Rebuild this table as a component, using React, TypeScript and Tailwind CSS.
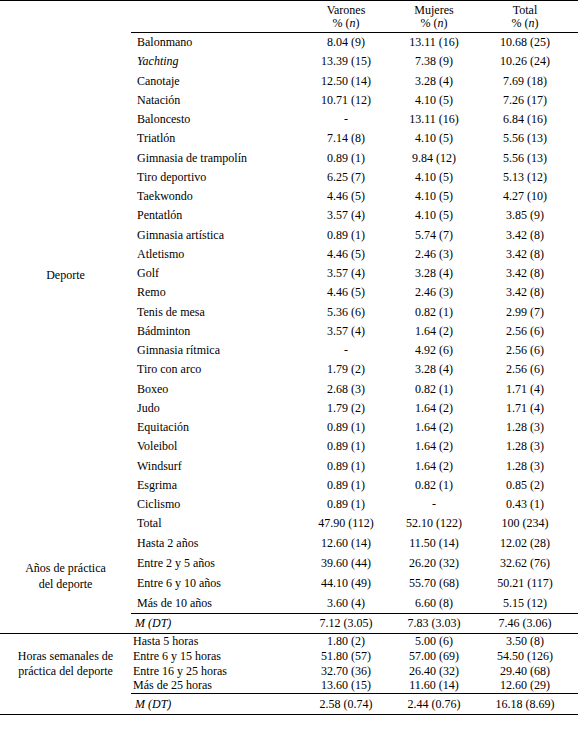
import React from 'react';

type Row = [string, string, string, string];

const sports: Row[] = [
  ['Balonmano', '8.04 (9)', '13.11 (16)', '10.68 (25)'],
  ['Yachting', '13.39 (15)', '7.38 (9)', '10.26 (24)'],
  ['Canotaje', '12.50 (14)', '3.28 (4)', '7.69 (18)'],
  ['Natación', '10.71 (12)', '4.10 (5)', '7.26 (17)'],
  ['Baloncesto', '-', '13.11 (16)', '6.84 (16)'],
  ['Triatlón', '7.14 (8)', '4.10 (5)', '5.56 (13)'],
  ['Gimnasia de trampolín', '0.89 (1)', '9.84 (12)', '5.56 (13)'],
  ['Tiro deportivo', '6.25 (7)', '4.10 (5)', '5.13 (12)'],
  ['Taekwondo', '4.46 (5)', '4.10 (5)', '4.27 (10)'],
  ['Pentatlón', '3.57 (4)', '4.10 (5)', '3.85 (9)'],
  ['Gimnasia artística', '0.89 (1)', '5.74 (7)', '3.42 (8)'],
  ['Atletismo', '4.46 (5)', '2.46 (3)', '3.42 (8)'],
  ['Golf', '3.57 (4)', '3.28 (4)', '3.42 (8)'],
  ['Remo', '4.46 (5)', '2.46 (3)', '3.42 (8)'],
  ['Tenis de mesa', '5.36 (6)', '0.82 (1)', '2.99 (7)'],
  ['Bádminton', '3.57 (4)', '1.64 (2)', '2.56 (6)'],
  ['Gimnasia rítmica', '-', '4.92 (6)', '2.56 (6)'],
  ['Tiro con arco', '1.79 (2)', '3.28 (4)', '2.56 (6)'],
  ['Boxeo', '2.68 (3)', '0.82 (1)', '1.71 (4)'],
  ['Judo', '1.79 (2)', '1.64 (2)', '1.71 (4)'],
  ['Equitación', '0.89 (1)', '1.64 (2)', '1.28 (3)'],
  ['Voleibol', '0.89 (1)', '1.64 (2)', '1.28 (3)'],
  ['Windsurf', '0.89 (1)', '1.64 (2)', '1.28 (3)'],
  ['Esgrima', '0.89 (1)', '0.82 (1)', '0.85 (2)'],
  ['Ciclismo', '0.89 (1)', '-', '0.43 (1)'],
];

const years: Row[] = [
  ['Hasta 2 años', '12.60 (14)', '11.50 (14)', '12.02 (28)'],
  ['Entre 2 y 5 años', '39.60 (44)', '26.20 (32)', '32.62 (76)'],
  ['Entre 6 y 10 años', '44.10 (49)', '55.70 (68)', '50.21 (117)'],
  ['Más de 10 años', '3.60 (4)', '6.60 (8)', '5.15 (12)'],
];

const hours: Row[] = [
  ['Hasta 5 horas', '1.80 (2)', '5.00 (6)', '3.50 (8)'],
  ['Entre 6 y 15 horas', '51.80 (57)', '57.00 (69)', '54.50 (126)'],
  ['Entre 16 y 25 horas', '32.70 (36)', '26.40 (32)', '29.40 (68)'],
  ['Más de 25 horas', '13.60 (15)', '11.60 (14)', '12.60 (29)'],
];

function Vals({ r, line }: { r: Row; line?: boolean }) {
  const b = line ? 'border-b border-black' : '';
  return (
    <>
      <td className={`p-0 text-center whitespace-nowrap ${b}`}>{r[1]}</td>
      <td className={`p-0 text-center whitespace-nowrap ${b}`}>{r[2]}</td>
      <td className={`p-0 pr-[4px] text-center whitespace-nowrap ${b}`}>{r[3]}</td>
    </>
  );
}

export default function App() {
  return (
    <div className="w-[578px] h-[731px] bg-white text-black font-[Liberation_Serif,Times_New_Roman,serif] text-[12px] leading-none">
      <table className="w-[578px] table-fixed border-collapse border-t border-black">
        <colgroup>
          <col className="w-[131px]" />
          <col className="w-[169px]" />
          <col className="w-[92px]" />
          <col className="w-[84px]" />
          <col className="w-[102px]" />
        </colgroup>
        <thead>
          <tr className="h-[16px]">
            <th className="p-0" />
            <th className="p-0" />
            <th className="p-0 pt-[3px] font-normal text-center">Varones</th>
            <th className="p-0 pt-[3px] font-normal text-center">Mujeres</th>
            <th className="p-0 pt-[3px] pr-[4px] font-normal text-center">Total</th>
          </tr>
          <tr className="h-[16px]">
            <th className="p-0" />
            <th className="p-0 border-b border-black" />
            <th className="p-0 pb-[2px] font-normal text-center border-b border-black">
              % (<i>n</i>)
            </th>
            <th className="p-0 pb-[2px] font-normal text-center border-b border-black">
              % (<i>n</i>)
            </th>
            <th className="p-0 pb-[2px] pr-[4px] font-normal text-center border-b border-black">
              % (<i>n</i>)
            </th>
          </tr>
        </thead>
        <tbody>
          {sports.map((r, i) => (
            <tr key={r[0]} className="h-[19.25px]">
              {i === 0 && (
                <td rowSpan={25} className="p-0 pt-[4px] text-center align-middle">
                  Deporte
                </td>
              )}
              <td className="p-0 pl-[6px] whitespace-nowrap">
                {r[0] === 'Yachting' ? <i>Yachting</i> : r[0]}
              </td>
              <Vals r={r} />
            </tr>
          ))}
          <tr className="h-[19.25px]">
            <td rowSpan={6} className="p-0 pt-[6px] text-center align-middle leading-[16px] border-b border-black">
              Años de práctica
              <br />
              del deporte
            </td>
            <td className="p-0 pl-[6px]">Total</td>
            <Vals r={['Total', '47.90 (112)', '52.10 (122)', '100 (234)']} />
          </tr>
          {years.map((r, i) => (
            <tr key={r[0]} className="h-[20px]">
              <td className={`p-0 pl-[6px] whitespace-nowrap ${i === 3 ? 'border-b border-black' : ''}`}>{r[0]}</td>
              <Vals r={r} line={i === 3} />
            </tr>
          ))}
          <tr className="h-[20px]">
            <td className="p-0 pl-[4px] italic border-b border-black">M (DT)</td>
            <Vals r={['', '7.12 (3.05)', '7.83 (3.03)', '7.46 (3.06)']} line />
          </tr>
          {hours.map((r, i) => (
            <tr key={r[0]} className="h-[15px]">
              {i === 0 && (
                <td rowSpan={4} className="p-0 pt-[2px] text-center align-middle leading-[15px]">
                  Horas semanales de
                  <br />
                  práctica del deporte
                </td>
              )}
              <td className={`p-0 pl-[2px] whitespace-nowrap ${i === 3 ? 'border-b border-black' : ''}`}>{r[0]}</td>
              <Vals r={r} line={i === 3} />
            </tr>
          ))}
          <tr className="h-[21px]">
            <td className="p-0 border-b border-black" />
            <td className="p-0 pl-[4px] italic border-b border-black">M (DT)</td>
            <Vals r={['', '2.58 (0.74)', '2.44 (0.76)', '16.18 (8.69)']} line />
          </tr>
        </tbody>
      </table>
    </div>
  );
}
